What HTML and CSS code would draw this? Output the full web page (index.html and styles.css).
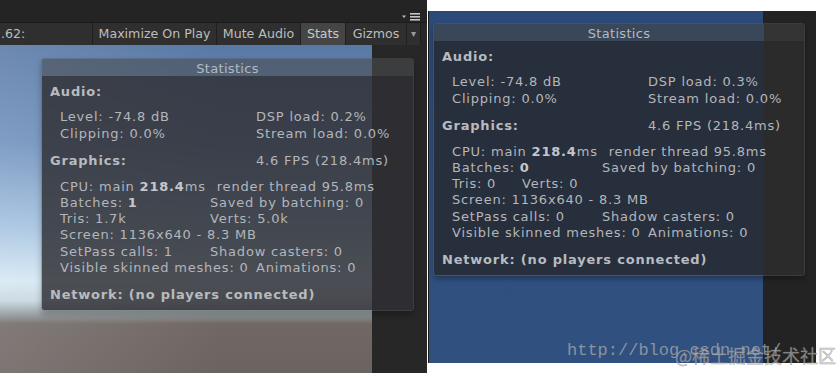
FILE: index.html
```html
<!DOCTYPE html>
<html lang="en">
<head>
    <meta charset="UTF-8">
    <meta name="viewport" content="width=device-width, initial-scale=1.0">
    <title>Unity Stats</title>
    <link rel="stylesheet" href="styles.css">
</head>
<body>
    <div class="shot shot-a">
        <div class="topbar">
            <svg class="menu-icon" width="20" height="8" viewBox="0 0 20 8">
                <path d="M0 2.5 L4 2.5 L2 5 Z" fill="#bdbdbd"/>
                <rect x="8" y="0" width="10" height="1.6" fill="#c4c4c4"/>
                <rect x="8" y="3" width="10" height="1.6" fill="#c4c4c4"/>
                <rect x="8" y="6" width="10" height="1.6" fill="#c4c4c4"/>
            </svg>
        </div>
        <div class="toolbar">
            <div class="tb-label">.62:</div>
            <div class="tb-btn w-max">Maximize On Play</div>
            <div class="tb-btn w-mute">Mute Audio</div>
            <div class="tb-btn w-stats on">Stats</div>
            <div class="tb-btn w-giz">Gizmos</div>
            <div class="tb-btn w-drop">▾</div>
            <div class="tb-end"></div>
        </div>
        <div class="viewport">
            <div class="scene sky"></div>
            <div class="gutter"></div>

            <div class="stats stats-a">
                <div class="stats-head">Statistics</div>
                <div class="stats-body">
                    <div class="title">Audio:</div>
                    <div class="group">
                        <div class="pair"><span>Level: -74.8 dB</span><span>DSP load: 0.2%</span></div>
                        <div class="pair"><span>Clipping: 0.0%</span><span>Stream load: 0.0%</span></div>
                    </div>
                    <div class="title pair-title"><span>Graphics:</span><span class="val">4.6 FPS (218.4ms)</span></div>
                    <div class="group">
                        <div class="line">CPU: main <b>218.4</b>ms<span class="sp">render thread 95.8ms</span></div>
                        <div class="pair narrow"><span>Batches: <b>1</b></span><span>Saved by batching: 0</span></div>
                        <div class="pair narrow"><span>Tris: 1.7k</span><span>Verts: 5.0k</span></div>
                        <div class="line">Screen: 1136x640 - 8.3 MB</div>
                        <div class="pair narrow"><span>SetPass calls: 1</span><span>Shadow casters: 0</span></div>
                        <div class="pair"><span>Visible skinned meshes: 0</span><span>Animations: 0</span></div>
                    </div>
                    <div class="title net">Network: (no players connected)</div>
                </div>
            </div>
        </div>
    </div>

    <div class="shot shot-b">
        <div class="scene clear"></div>
        <div class="gutter"></div>

        <div class="stats stats-b">
            <div class="stats-head">Statistics</div>
            <div class="stats-body">
                <div class="title">Audio:</div>
                <div class="group">
                    <div class="pair"><span>Level: -74.8 dB</span><span>DSP load: 0.3%</span></div>
                    <div class="pair"><span>Clipping: 0.0%</span><span>Stream load: 0.0%</span></div>
                </div>
                <div class="title pair-title"><span>Graphics:</span><span class="val">4.6 FPS (218.4ms)</span></div>
                <div class="group">
                    <div class="line">CPU: main <b>218.4</b>ms<span class="sp">render thread 95.8ms</span></div>
                    <div class="pair narrow"><span>Batches: <b>0</b></span><span>Saved by batching: 0</span></div>
                    <div class="pair tight"><span>Tris: 0</span><span>Verts: 0</span></div>
                    <div class="line">Screen: 1136x640 - 8.3 MB</div>
                    <div class="pair narrow"><span>SetPass calls: 0</span><span>Shadow casters: 0</span></div>
                    <div class="pair"><span>Visible skinned meshes: 0</span><span>Animations: 0</span></div>
                </div>
                <div class="title net">Network: (no players connected)</div>
            </div>
        </div>
    </div>

    <div class="watermark">
        <span class="wm-url">http://blog.csdn.net/</span>
        <span class="wm-cn">@稀土掘金技术社区</span>
    </div>
</body>
</html>
```

FILE: styles.css
```css
body {
    margin: 0;
    width: 838px;
    height: 373px;
    overflow: hidden;
    background-color: #fff;
    display: flex;
    align-items: flex-start;
    gap: 1px;
    position: relative;
    font-family: 'DejaVu Sans', sans-serif;
}
.shot {
    position: relative;
    flex: none;
}

/* left screenshot: editor toolbar + game view */
.shot-a {
    width: 427px;
    height: 373px;
    display: flex;
    flex-direction: column;
    background-color: #262626;
}
.topbar {
    height: 22px;
    background-color: #242424;
    border-bottom: 1px solid #1b1b1b;
    display: flex;
    justify-content: flex-end;
    align-items: flex-start;
}
.menu-icon {
    margin: 13px 5px 0 0;
}
.toolbar {
    height: 22px;
    display: flex;
    background-color: #2f2f2f;
    color: #bdbdbd;
    font-size: 12.6px;
    line-height: 22px;
}
.tb-label {
    width: 92px;
    padding-left: 1px;
    box-sizing: border-box;
}
.tb-btn {
    border-left: 1px solid #1f1f1f;
    text-align: center;
    box-sizing: border-box;
}
.w-max { width: 124px; }
.w-mute { width: 84px; }
.w-stats { width: 45px; }
.w-giz { width: 61px; }
.w-drop { width: 14px; font-size: 10px; color: #9a9a9a; }
.tb-btn.on {
    background-color: #454545;
    color: #c8c8c8;
}
.tb-end {
    flex: 1;
    border-left: 1px solid #1f1f1f;
    background-color: #282828;
}
.viewport {
    flex: 1;
    display: flex;
    position: relative;
}
.sky {
    width: 372px;
    background:
        linear-gradient(90deg, rgba(255, 255, 255, 0.12), rgba(255, 255, 255, 0) 60%),
        linear-gradient(180deg, #5878a6 0%, #6f90bc 30%, #a3c1df 55%, #d6e8f4 72%, #c6d6de 78%, #909a9e 82%, #716864 85%, #6b6360 100%);
}
.gutter {
    flex: 1;
    background-color: #272727;
}

/* right screenshot */
.shot-b {
    width: 388px;
    height: 352px;
    margin-top: 11px;
    display: flex;
    border-left: 1px solid #1c1c1c;
    box-sizing: border-box;
}
.clear {
    width: 334px;
    background: linear-gradient(180deg, #2c4a79 0%, #2f5080 60%, #30507f 100%);
}
.shot-b .gutter {
    background-color: #232323;
}

/* statistics panel */
.stats {
    position: absolute;
    box-sizing: border-box;
    border: 1px solid rgba(90, 90, 90, 0.45);
    border-radius: 3px;
    overflow: hidden;
    color: #b3b6ba;
    font-size: 13px;
    line-height: 16.25px;
}
.stats-a {
    left: 41px;
    top: 13px;
    width: 373px;
    box-shadow: 0 4px 6px rgba(0, 0, 0, 0.25);
}
.stats-b {
    left: 4px;
    top: 12px;
    width: 372px;
    box-shadow: 0 3px 5px rgba(0, 0, 0, 0.3);
}
.stats-head {
    height: 17px;
    line-height: 19px;
    text-align: center;
    letter-spacing: 0.3px;
    color: #b3b9c2;
}
.stats-a .stats-head {
    background-color: rgba(74, 76, 80, 0.6);
}
.stats-a .stats-body {
    background-color: rgba(48, 48, 52, 0.84);
}
.stats-b .stats-head {
    background: linear-gradient(90deg, #3a4759 0, #3a4759 330px, #343434 330px);
}
.stats-b .stats-body {
    background: linear-gradient(90deg, #272e3c 0, #272e3c 330px, #2b2b2b 330px);
}
.stats-body {
    padding: 8px 0 7px 8px;
    letter-spacing: 0.8px;
}
.title {
    font-weight: bold;
    color: #b8bbbf;
}
.pair-title {
    display: grid;
    grid-template-columns: 206px auto;
}
.pair-title .val {
    font-weight: normal;
    color: #b3b6ba;
}
.group {
    margin: 9px 0 11.5px 10px;
}
.pair {
    display: grid;
    grid-template-columns: 196px auto;
    white-space: nowrap;
}
.pair.narrow {
    grid-template-columns: 150px auto;
}
.pair.tight {
    grid-template-columns: 70px auto;
}
.line {
    white-space: nowrap;
}
.sp {
    margin-left: 11px;
}
b {
    color: #c4c7cb;
}
.net {
    margin-top: -0.5px;
}

/* watermark over the right screenshot */
.watermark {
    position: absolute;
    left: 567px;
    top: 340px;
    white-space: nowrap;
}
.wm-url {
    font-family: 'Liberation Mono', monospace;
    font-size: 17px;
    color: rgba(170, 170, 170, 0.75);
}
.wm-cn {
    position: absolute;
    left: 108px;
    top: 2px;
    font-family: 'Noto Sans CJK SC', sans-serif;
    font-size: 18px;
    color: rgba(200, 200, 200, 0.6);
    -webkit-text-stroke: 0.5px rgba(120, 120, 120, 0.6);
}
```
